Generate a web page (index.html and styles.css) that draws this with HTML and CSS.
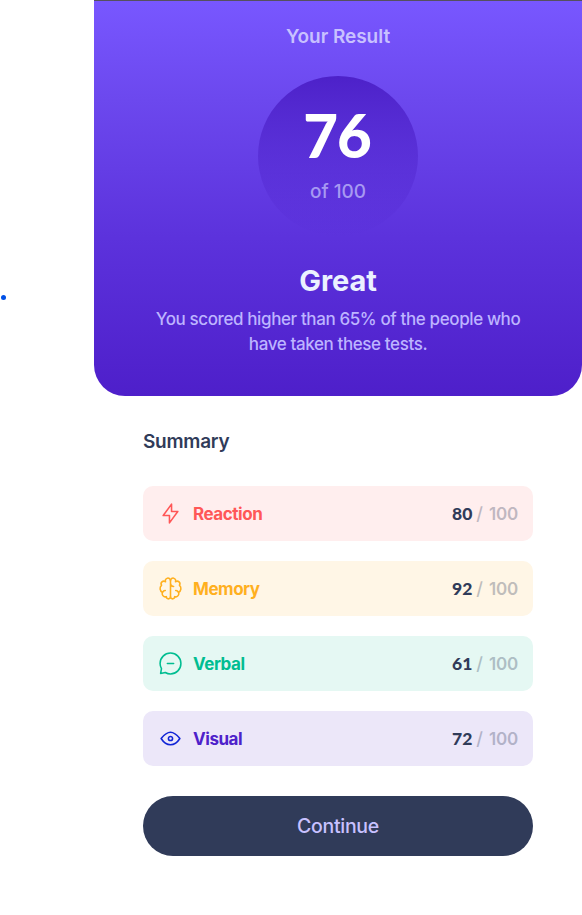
FILE: index.html
```html
<!DOCTYPE html>
<html lang="en">
<head>
<meta charset="utf-8">
<title>Results summary</title>
<link rel="stylesheet" href="styles.css">
</head>
<body>
<div class="page">
  <aside class="gutter"><span class="dot"></span></aside>
  <main class="card">
    <section class="result">
      <h1 class="result-title">Your Result</h1>
      <div class="score"><span class="score-value">76</span><span class="score-total">of 100</span></div>
      <h2 class="grade">Great</h2>
      <p class="message">You scored higher than 65% of the people who<br>have taken these tests.</p>
    </section>
    <section class="summary">
      <h2 class="summary-title">Summary</h2>
      <ul class="list">
        <li class="item reaction">
          <svg class="icon" viewBox="0 0 20 20"><path d="M10.833 8.333V2.5l-6.666 9.167h5V17.5l6.666-9.167h-5Z"/></svg>
          <span class="label">Reaction</span>
          <span class="value">80</span><span class="slash">/</span><span class="max">100</span>
        </li>
        <li class="item memory">
          <svg class="icon" viewBox="0 0 20 20"><path d="M5.833 11.667a2.5 2.5 0 1 0 .834 4.858"/><path d="M3.553 13.004a3.333 3.333 0 0 1-.728-5.53m.025-.067a2.083 2.083 0 0 1 2.983-2.824m.199.054A2.083 2.083 0 1 1 10 3.75v12.917a1.667 1.667 0 0 1-3.333 0M10 5.833a2.5 2.5 0 0 0 2.5 2.5m1.667 3.334a2.5 2.5 0 1 1-.834 4.858"/><path d="M16.447 13.004a3.334 3.334 0 0 0 .728-5.53m-.025-.067a2.083 2.083 0 0 0-2.983-2.824M10 3.75a2.085 2.085 0 0 1 2.538-2.033 2.084 2.084 0 0 1 1.43 2.92m-.635 12.028a1.667 1.667 0 0 1-3.333 0"/></svg>
          <span class="label">Memory</span>
          <span class="value">92</span><span class="slash">/</span><span class="max">100</span>
        </li>
        <li class="item verbal">
          <svg class="icon" viewBox="0 0 20 20"><path d="M7.5 10h5M10 18.333A8.333 8.333 0 1 0 1.667 10c0 1.518.406 2.942 1.115 4.167l-.699 3.75 3.75-.699A8.295 8.295 0 0 0 10 18.333Z"/></svg>
          <span class="label">Verbal</span>
          <span class="value">61</span><span class="slash">/</span><span class="max">100</span>
        </li>
        <li class="item visual">
          <svg class="icon" viewBox="0 0 20 20"><path d="M10 11.667a1.667 1.667 0 1 0 0-3.334 1.667 1.667 0 0 0 0 3.334Z"/><path d="M17.5 10c-1.574 2.492-4.402 5-7.5 5s-5.926-2.508-7.5-5C4.416 7.632 6.66 5 10 5s5.584 2.632 7.5 5Z"/></svg>
          <span class="label">Visual</span>
          <span class="value">72</span><span class="slash">/</span><span class="max">100</span>
        </li>
      </ul>
      <button class="continue" type="button">Continue</button>
    </section>
  </main>
</div>
</body>
</html>
```
FILE: styles.css
```css
* { box-sizing: border-box; }
body { margin: 0; background: #fff; font-family: Inter, "Liberation Sans", sans-serif; }
h1, h2, p, ul { margin: 0; padding: 0; }
.page { display: grid; grid-template-columns: 94px 488px; height: 915px; overflow: hidden; }
.gutter { padding: 295px 0 0 1px; }
.dot { display: block; width: 5px; height: 5px; border-radius: 50%; background: #0050e6; }
.result {
  height: 396px; padding-top: 22px; text-align: center;
  border-top: 1px solid #55505f; border-radius: 0 0 31px 31px;
  background: linear-gradient(#7857ff, #6c48ee 25%, #5c32dc 60%, #4e1fca);
}
.result-title { font-size: 19px; line-height: 28px; font-weight: 600; color: #c8c1ff; letter-spacing: -0.05px; }
.score {
  width: 160px; height: 160px; margin: 25px auto 0; border-radius: 50%; padding-top: 24px;
  display: flex; flex-direction: column; align-items: center;
  background: linear-gradient(#4d21c9, rgba(77, 33, 201, 0));
}
.score-value { font-family: Lato, sans-serif; font-size: 60px; line-height: 70px; font-weight: 900; color: #fff; letter-spacing: -1px; margin-right: 2px; }
.score-total { font-size: 19px; line-height: 28px; margin-top: 8px; color: #a799f2; font-weight: 500; }
.grade { margin-top: 25px; font-size: 29px; line-height: 40px; font-weight: 700; color: #ebf1ff; letter-spacing: -0.1px; }
.message { margin-top: 6px; font-size: 17px; line-height: 25px; font-weight: 500; color: #bdb4ff; letter-spacing: -0.39px; }
.summary { padding: 32px 49px 0; }
.summary-title { font-size: 19px; line-height: 28px; font-weight: 600; color: #303b59; letter-spacing: -0.25px; }
.list { list-style: none; margin-top: 30px; display: flex; flex-direction: column; gap: 20px; }
.item { height: 55px; border-radius: 10px; padding: 0 15px; display: flex; align-items: center; font-size: 17px; line-height: 24px; font-weight: 700; }
.icon { width: 25px; height: 25px; margin-right: 10px; fill: none; stroke: currentColor; stroke-width: 1.25; stroke-linecap: round; stroke-linejoin: round; }
.label { flex: 1; letter-spacing: -0.45px; }
.value { font-family: Lato, sans-serif; font-size: 17.5px; font-weight: 900; color: #303b59; }
.slash { color: #303b59; opacity: .3; font-weight: 500; font-size: 18px; margin: 0 6px 0 4px; }
.max { color: #303b59; opacity: .3; font-weight: 600; letter-spacing: -0.2px; }
.reaction { color: #ff5757; background: #ffeeee; }
.memory { color: #ffb01f; background: #fff6e6; }
.verbal { color: #00bd91; background: #e5f8f3; }
.visual { color: #4e21ca; background: #ece7f9; }
.visual .icon { color: #1125d6; }
.continue { display: block; width: 390px; height: 60px; margin-top: 30px; border: 0; border-radius: 30px; background: #303b59; color: #c8c1ff; font: 500 19.5px Inter, sans-serif; letter-spacing: -0.3px; }
```
